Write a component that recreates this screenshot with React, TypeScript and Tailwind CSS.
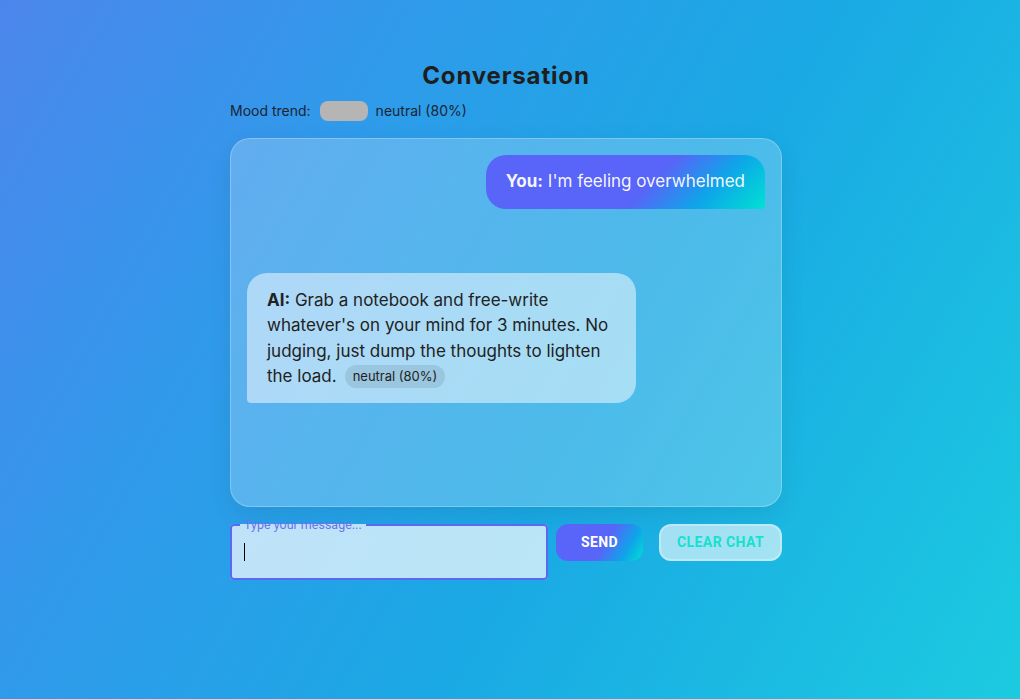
export default function App() {
  return (
    <div
      className="min-h-screen w-full bg-[linear-gradient(120deg,#4c86ec_0%,#2f9bea_30%,#1aa8e4_58%,#1ccbe0_100%)] font-['Inter','Noto_Sans',sans-serif] text-[#1d1d1f]"
    >
      <div className="mx-auto w-[560px] pr-2 pt-[60px]">
        {/* Header */}
        <h1 className="text-center text-[24px] leading-8 font-bold tracking-[0.035em] text-[#1e1e1e]">
          Conversation
        </h1>
        <div className="mt-[9px] flex items-center text-[14px] leading-5 text-[#1a2533]">
          <span>Mood trend:</span>
          <span className="ml-[9px] h-5 w-12 rounded-lg bg-[#b5b5b5]" />
          <span className="ml-2">neutral (80%)</span>
        </div>

        {/* Chat window */}
        <div className="mt-[17px] h-[369px] rounded-[20px] border border-white/25 bg-white/[0.22] p-4 shadow-[0_8px_24px_rgba(0,0,0,0.08)]">
          <div className="flex justify-end">
            <div className="rounded-[20px] rounded-br-[4px] bg-[linear-gradient(135deg,#5865f8_58%,#0ea5e9_78%,#00e2d2_100%)] px-5 py-[14px] text-[17px] leading-[25.5px] text-white/95">
              <span className="font-bold">You:</span> I'm feeling overwhelmed
            </div>
          </div>

          <div className="mt-16 flex justify-start">
            <div className="max-w-[75%] rounded-[20px] rounded-bl-[4px] bg-white/50 px-5 pt-[15px] pb-[13px] text-[17px] leading-[25.5px] text-[#222]">
              <span className="font-bold">AI:</span> Grab a notebook and free-write whatever's on your mind for 3 minutes. No judging, just dump the thoughts to lighten the load.
              <span className="ml-2 inline-block rounded-full bg-black/[0.09] px-2 align-[1px] text-[13px] leading-[23px] text-[#222]">
                neutral (80%)
              </span>
            </div>
          </div>
        </div>

        {/* Input row */}
        <div className="mt-[10px] flex items-start font-['Roboto','Liberation_Sans',sans-serif]">
          <fieldset className="h-[63px] w-[318px] rounded-[4px] border-2 border-[#5b67f5] bg-white/70 px-3">
            <legend className="-ml-1 px-1 text-[12.5px] leading-4 text-[#6a72f0]">
              Type your message...
            </legend>
            <div className="flex h-[38px] items-center">
              <span className="h-[18px] w-px bg-black" />
            </div>
          </fieldset>
          <button className="mt-[7px] ml-2 h-[37px] w-[87px] rounded-xl bg-[linear-gradient(120deg,#5865f8_55%,#0ea5e9_80%,#00e2d2_100%)] text-[14px] font-bold tracking-[0.03em] text-white">
            SEND
          </button>
          <button className="mt-[7px] ml-4 h-[37px] w-[123px] rounded-xl border-2 border-white/30 bg-white/60 text-[14px] font-bold tracking-[0.03em] text-[#16e0d0]">
            CLEAR CHAT
          </button>
        </div>
      </div>
    </div>
  );
}
